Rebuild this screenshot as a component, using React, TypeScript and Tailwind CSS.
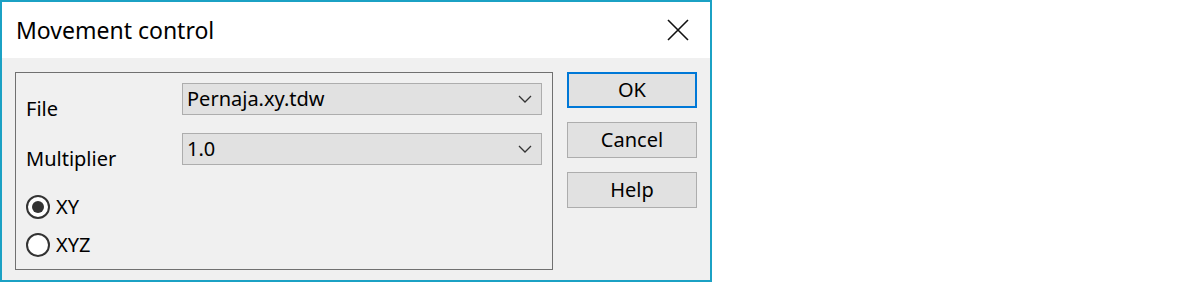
import { useState } from "react";

const Chevron = () => (
  <svg width="14" height="8" viewBox="0 0 14 8" fill="none" className="shrink-0">
    <path d="M1 1l6 6 6-6" stroke="#333" strokeWidth="1.3" />
  </svg>
);

const Combo = ({ value }: { value: string }) => (
  <div className="flex h-[32px] w-[360px] items-center justify-between border border-[#adadad] bg-[#e1e1e1] pl-[4px] pr-[9px]">
    <span className="leading-none">{value}</span>
    <Chevron />
  </div>
);

const Radio = ({
  label,
  checked,
  onClick,
}: {
  label: string;
  checked: boolean;
  onClick: () => void;
}) => (
  <button type="button" onClick={onClick} className="flex h-[24px] items-center gap-[6px]">
    <span className="flex h-[24px] w-[24px] items-center justify-center rounded-full border-2 border-[#333] bg-white">
      {checked && <span className="h-[12px] w-[12px] rounded-full bg-[#333]" />}
    </span>
    <span className="leading-none">{label}</span>
  </button>
);

const DlgButton = ({ label, focused }: { label: string; focused?: boolean }) => (
  <button
    type="button"
    className={
      focused
        ? "flex h-[36px] w-[130px] items-center justify-center border-2 border-[#0078d7] bg-[#e1e1e1]"
        : "flex h-[36px] w-[130px] items-center justify-center border border-[#adadad] bg-[#e1e1e1]"
    }
  >
    {label}
  </button>
);

export default function App() {
  const [mode, setMode] = useState("XY");

  return (
    <div
      className="flex h-[282px] w-[1200px] bg-white text-[20px] text-black"
      style={{ fontFamily: '"Noto Sans", "Open Sans", sans-serif' }}
    >
      <div className="flex h-[282px] w-[712px] flex-col border-2 border-[#1ba1c4]">
        <div className="flex h-[56px] items-center justify-between bg-white pl-[14px] pr-[21px]">
          <h1 className="text-[23px] leading-none">Movement control</h1>
          <svg width="22" height="22" viewBox="0 0 22 22" fill="none">
            <path d="M1 1l20 20M21 1L1 21" stroke="#111" strokeWidth="1.6" />
          </svg>
        </div>

        <div className="flex flex-1 gap-[14px] bg-[#f0f0f0] pl-[13px] pt-[14px]">
          <div className="flex h-[198px] w-[538px] flex-col border border-[#707070] pl-[10px] pr-[10px] pt-[10px]">
            <div className="flex h-[32px] items-start justify-between">
              <span className="mt-[16px] leading-none">File</span>
              <Combo value="Pernaja.xy.tdw" />
            </div>
            <div className="mt-[18px] flex h-[32px] items-start justify-between">
              <span className="mt-[16px] leading-none">Multiplier</span>
              <Combo value="1.0" />
            </div>
            <div className="mt-[30px] flex flex-col items-start gap-[14px]">
              <Radio label="XY" checked={mode === "XY"} onClick={() => setMode("XY")} />
              <Radio label="XYZ" checked={mode === "XYZ"} onClick={() => setMode("XYZ")} />
            </div>
          </div>

          <div className="flex flex-col gap-[14px]">
            <DlgButton label="OK" focused />
            <DlgButton label="Cancel" />
            <DlgButton label="Help" />
          </div>
        </div>
      </div>
    </div>
  );
}
